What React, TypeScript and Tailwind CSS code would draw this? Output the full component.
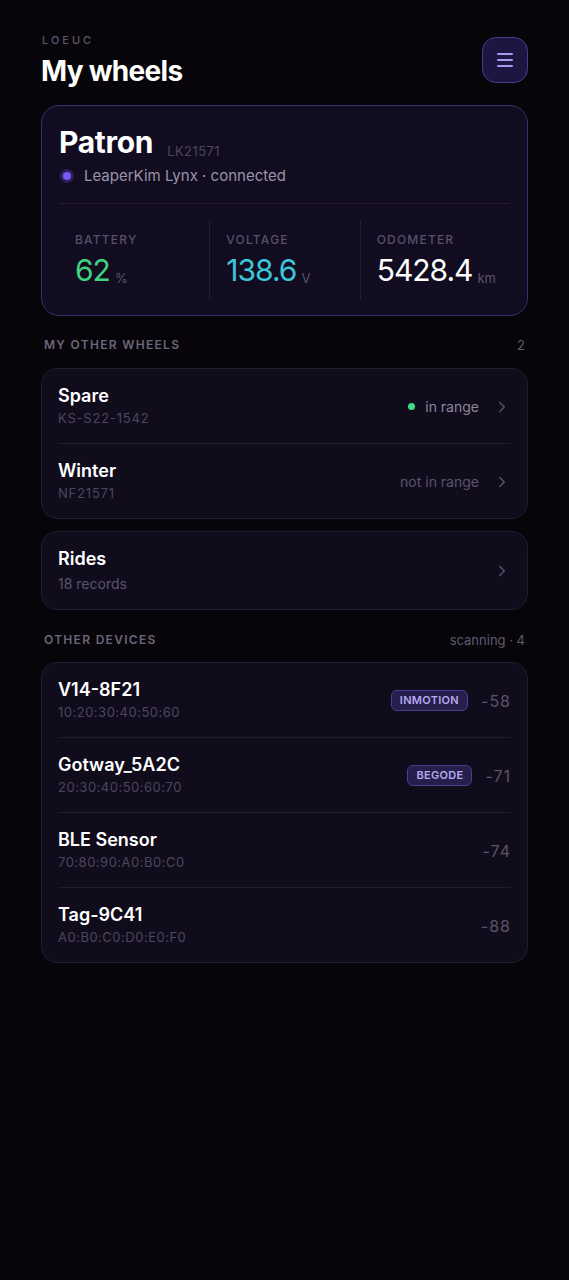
import { ChevronRight } from 'lucide-react'

interface Wheel {
  name: string
  serial: string
  inRange: boolean
}

interface Device {
  name: string
  mac: string
  brand?: string
  rssi: number
}

const WHEELS: Wheel[] = [
  { name: 'Spare', serial: 'KS-S22-1542', inRange: true },
  { name: 'Winter', serial: 'NF21571', inRange: false },
]

const DEVICES: Device[] = [
  { name: 'V14-8F21', mac: '10:20:30:40:50:60', brand: 'INMOTION', rssi: -58 },
  { name: 'Gotway_5A2C', mac: '20:30:40:50:60:70', brand: 'BEGODE', rssi: -71 },
  { name: 'BLE Sensor', mac: '70:80:90:A0:B0:C0', rssi: -74 },
  { name: 'Tag-9C41', mac: 'A0:B0:C0:D0:E0:F0', rssi: -88 },
]

function Stat({ label, value, unit, color, first }: { label: string; value: string; unit: string; color: string; first?: boolean }) {
  return (
    <div className={first ? 'px-4 py-3' : 'border-l border-[#241d36] px-4 py-3'}>
      <p className="text-[12px] leading-4 font-medium tracking-[1.2px] text-[#57516a]">{label}</p>
      <p className="mt-[4px] flex items-baseline">
        <span className={`text-[30px] leading-9 font-normal tracking-[-1px] ${color}`}>{value}</span>
        <span className="ml-[5px] translate-y-[2px] text-[13px] text-[#5a5468]">{unit}</span>
      </p>
    </div>
  )
}

function SectionHeader({ title, right }: { title: string; right: string }) {
  return (
    <div className="flex items-center justify-between px-[3px] text-[12px] leading-4">
      <span className="font-semibold tracking-[1.3px] text-[#6c667b]">{title}</span>
      <span className="text-[13px] text-[#5f596f]">{right}</span>
    </div>
  )
}

export default function App() {
  return (
    <div className="min-h-[1280px] bg-[#070509] px-[41px] pt-[33px] pb-10 font-['Inter',sans-serif] text-white">
      {/* ── Header ────────────────────────────────────────────── */}
      <div className="flex items-center justify-between">
        <div>
          <p className="pl-[1px] text-[11px] leading-[14px] font-medium tracking-[3px] text-[#5d586a]">LOEUC</p>
          <h1 className="mt-[7px] text-[28px] leading-[34px] font-bold tracking-[-0.7px]">My wheels</h1>
        </div>
        <button className="mb-[2px] flex h-[46px] w-[46px] items-center justify-center rounded-[14px] border border-[#4a3d8c] bg-[#1c1640]">
          <span className="flex w-4 flex-col gap-[4px]">
            <span className="h-[2px] rounded-full bg-[#a898f2]" />
            <span className="h-[2px] rounded-full bg-[#a898f2]" />
            <span className="h-[2px] rounded-full bg-[#a898f2]" />
          </span>
        </button>
      </div>

      {/* ── Current wheel ─────────────────────────────────────── */}
      <div className="mt-[17px] rounded-[18px] border border-[#3a2f6c] bg-[#110c1f] px-[17px] pt-[18px] pb-[15px]">
        <div className="flex items-end gap-[14px]">
          <h2 className="text-[30px] leading-9 font-bold tracking-[-0.3px]">Patron</h2>
          <span className="mb-[-1px] text-[13px] leading-5 tracking-[0.4px] text-[#4d475d]">LK21571</span>
        </div>
        <div className="mt-[6px] flex items-center">
          <span className="ml-[4px] h-2 w-2 rounded-full bg-[#7b5cf2] ring-[3px] ring-[#2a2058]" />
          <span className="ml-[13px] text-[15px] leading-5 text-[#9a94a8]">LeaperKim Lynx · connected</span>
        </div>
        <div className="mt-[17px] h-px bg-[#221b33]" />
        <div className="mt-[16px] grid grid-cols-3">
          <Stat first label="BATTERY" value="62" unit="%" color="text-[#3fd27f]" />
          <Stat label="VOLTAGE" value="138.6" unit="V" color="text-[#3cc6d9]" />
          <Stat label="ODOMETER" value="5428.4" unit="km" color="text-white" />
        </div>
      </div>

      {/* ── Other wheels ──────────────────────────────────────── */}
      <div className="mt-[21px]">
        <SectionHeader title="MY OTHER WHEELS" right="2" />
      </div>
      <div className="mt-[15px] rounded-2xl border border-[#221c31] bg-[#100c1c]">
        {WHEELS.map((w, i) => (
          <div key={w.name}>
            {i > 0 && <div className="mx-4 h-px bg-[#221c31]" />}
            <div className="flex items-center justify-between px-4 pt-[17px] pb-4">
              <div>
                <p className="text-[18px] leading-5 font-semibold">{w.name}</p>
                <p className="mt-[3px] text-[13px] leading-[18px] tracking-[0.8px] text-[#4c465c]">{w.serial}</p>
              </div>
              <div className="flex items-center">
                {w.inRange && <span className="mr-[10px] h-[7px] w-[7px] rounded-full bg-[#3ddc84]" />}
                <span className={w.inRange ? 'text-[14px] text-[#8c869c]' : 'text-[14px] text-[#5b556c]'}>
                  {w.inRange ? 'in range' : 'not in range'}
                </span>
                <ChevronRight className="ml-[14px] h-[18px] w-[18px] text-[#5b556c]" strokeWidth={1.8} />
              </div>
            </div>
          </div>
        ))}
      </div>

      {/* ── Rides ─────────────────────────────────────────────── */}
      <div className="mt-[12px] flex items-center justify-between rounded-2xl border border-[#221c31] bg-[#100c1c] px-4 pt-4 pb-4">
        <div>
          <p className="text-[18px] leading-[22px] font-semibold">Rides</p>
          <p className="mt-[5px] text-[14px] leading-[18px] text-[#5b556c]">18 records</p>
        </div>
        <ChevronRight className="h-[18px] w-[18px] text-[#5b556c]" strokeWidth={1.8} />
      </div>

      {/* ── Other devices ─────────────────────────────────────── */}
      <div className="mt-[22px]">
        <SectionHeader title="OTHER DEVICES" right="scanning · 4" />
      </div>
      <div className="mt-[14px] rounded-2xl border border-[#221c31] bg-[#100c1c]">
        {DEVICES.map((d, i) => (
          <div key={d.mac}>
            {i > 0 && <div className="mx-4 h-px bg-[#221c31]" />}
            <div className="flex items-center justify-between px-4 pt-[17px] pb-4">
              <div>
                <p className="text-[18px] leading-5 font-semibold">{d.name}</p>
                <p className="mt-[3px] text-[13px] leading-[18px] tracking-[0.5px] text-[#4c465c]">{d.mac}</p>
              </div>
              <div className="flex items-center">
                {d.brand && (
                  <span className="mr-[13px] rounded-md border border-[#4a3e8e] bg-[#261e4c] px-[8px] py-[3px] text-[11px] leading-[13px] font-semibold tracking-[0.3px] text-[#b6aaee]">
                    {d.brand}
                  </span>
                )}
                <span className="text-[16px] tracking-[1px] text-[#5a5468]">{d.rssi}</span>
              </div>
            </div>
          </div>
        ))}
      </div>
    </div>
  )
}
